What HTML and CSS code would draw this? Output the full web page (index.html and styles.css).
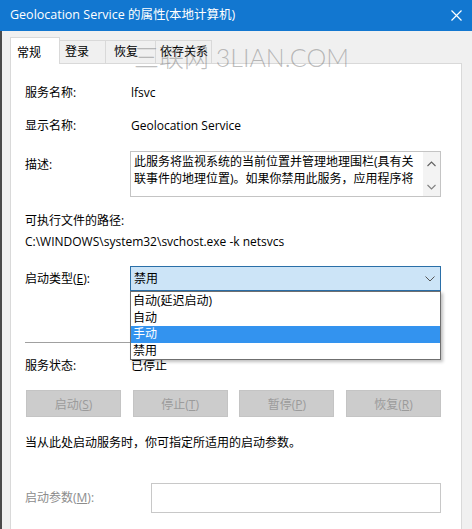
FILE: index.html
```html
<!DOCTYPE html>
<html lang="zh-CN">
<head>
  <meta charset="UTF-8">
  <title>Geolocation Service 的属性(本地计算机)</title>
  <link rel="stylesheet" href="styles.css">
</head>
<body>

<div class="window">
  <div class="titlebar">
    <span class="title">Geolocation Service 的属性(本地计算机)</span>
    <svg class="close" width="11" height="11" viewBox="0 0 11 11">
      <path d="M0.5 0.5 L10.5 10.5 M10.5 0.5 L0.5 10.5" stroke="#fff" stroke-width="1.2"/>
    </svg>
  </div>

  <div class="frame">
    <div class="tabs">
      <div class="tab active">常规</div>
      <div class="tab t-logon">登录</div>
      <div class="tab t-recover">恢复</div>
      <div class="tab t-deps">依存关系</div>
    </div>

    <div class="panel">
      <div class="row r-name">
        <span class="label">服务名称:</span>
        <span class="value">lfsvc</span>
      </div>
      <div class="row r-display">
        <span class="label">显示名称:</span>
        <span class="value">Geolocation Service</span>
      </div>
      <div class="row r-desc">
        <span class="label desc-label">描述:</span>
        <div class="descbox">
          <div class="desc-text">此服务将监视系统的当前位置并管理地理围栏(具有关联事件的地理位置)。如果你禁用此服务，应用程序将</div>
          <div class="scroll">
            <svg width="9" height="6" viewBox="0 0 9 6"><path d="M0.5 5 L4.5 1 L8.5 5" fill="none" stroke="#606060" stroke-width="1.1"/></svg>
            <svg width="9" height="6" viewBox="0 0 9 6"><path d="M0.5 1 L4.5 5 L8.5 1" fill="none" stroke="#808080" stroke-width="1.1"/></svg>
          </div>
        </div>
      </div>

      <div class="exe-label">可执行文件的路径:</div>
      <div class="exe-path">C:\WINDOWS\system32\svchost.exe -k netsvcs</div>

      <div class="row r-start">
        <span class="label">启动类型(<u>E</u>):</span>
        <div class="combo">
          <span>禁用</span>
          <svg width="10" height="6" viewBox="0 0 10 6"><path d="M0.5 0.5 L5 5 L9.5 0.5" fill="none" stroke="#555" stroke-width="1"/></svg>
        </div>
        <ul class="droplist">
          <li>自动(延迟启动)</li>
          <li>自动</li>
          <li class="selected">手动</li>
          <li>禁用</li>
        </ul>
      </div>

      <div class="separator"></div>

      <div class="row r-status">
        <span class="label">服务状态:</span>
        <span class="value">已停止</span>
      </div>

      <div class="buttons">
        <button disabled>启动(<u>S</u>)</button>
        <button disabled>停止(<u>T</u>)</button>
        <button disabled>暂停(<u>P</u>)</button>
        <button disabled>恢复(<u>R</u>)</button>
      </div>

      <p class="hint">当从此处启动服务时，你可指定所适用的启动参数。</p>

      <div class="row r-params">
        <span class="label muted">启动参数(<u>M</u>):</span>
        <div class="param-input"></div>
      </div>
    </div>
  </div>

  <div class="watermark">三联网 3LIAN.COM</div>
</div>

</body>
</html>
```

FILE: styles.css
```css
* {
  box-sizing: border-box;
}

body {
  margin: 0;
  width: 472px;
  height: 529px;
  overflow: hidden;
  font-family: "Open Sans", "Noto Sans CJK SC", sans-serif;
  font-size: 12px;
  color: #000;
  background: #f0f0f0;
}

.window {
  position: relative;
  height: 529px;
}

/* 标题栏 */
.titlebar {
  height: 31px;
  background: #1277d0;
  color: #fff;
  display: flex;
  align-items: center;
  justify-content: space-between;
  padding: 0 10px 1px 10px;
}

.title {
  font-size: 12.5px;
  line-height: 16px;
}

/* 窗体 */
.frame {
  height: 498px;
  background: #f0f0f0;
  border-left: 2px solid #4a4a4a;
  padding: 6px 10px 0 8px;
}

.tabs {
  display: flex;
  align-items: flex-end;
  height: 26px;
}

.tab {
  height: 23px;
  line-height: 22px;
  padding-left: 5px;
  background: #f0f0f0;
  border: 1px solid #d9d9d9;
  border-left: none;
  border-bottom: none;
}

.tab.active {
  width: 50px;
  height: 27px;
  line-height: 29px;
  padding-left: 6px;
  background: #fff;
  border-left: 1px solid #d9d9d9;
  position: relative;
  z-index: 1;
  margin-bottom: -1px;
}

.t-logon { width: 46px; }
.t-recover { width: 50px; padding-left: 8px; }
.t-deps { width: 56px; padding-left: 4px; }

.panel {
  background: #fff;
  border: 1px solid #d9d9d9;
  height: 470px;
  padding: 21px 20px 0 14px;
}

.row {
  display: flex;
  align-items: flex-start;
  line-height: 16px;
}

.label {
  width: 105px;
  flex-shrink: 0;
}

.value {
  padding-left: 1px;
}

.r-display { margin-top: 17px; }

.r-desc { margin-top: 17px; }

.desc-label {
  margin-top: 6px;
}

.descbox {
  flex: 1;
  height: 46px;
  border: 1px solid #c4c4c4;
  display: flex;
  overflow: hidden;
}

.desc-text {
  flex: 1;
  padding: 1px 0 0 3px;
  line-height: 17px;
  width: 290px;
}

.scroll {
  width: 17px;
  background: #f3f3f3;
  display: flex;
  flex-direction: column;
  align-items: center;
  justify-content: space-between;
  padding: 9px 0 6px 0;
}

.exe-label {
  margin-top: 16px;
  line-height: 16px;
}

.exe-path {
  margin-top: 5px;
  line-height: 16px;
}

/* 启动类型 */
.r-start {
  margin-top: 16px;
  position: relative;
  align-items: center;
}

.combo {
  flex: 1;
  height: 25px;
  background: #cce4f7;
  border: 1px solid #2a6fa8;
  display: flex;
  align-items: center;
  justify-content: space-between;
  padding: 0 5px 0 3px;
}

.droplist {
  position: absolute;
  top: 25px;
  left: 105px;
  right: 0;
  margin: 0;
  padding: 1px 0 0 0;
  list-style: none;
  background: #fff;
  border: 1px solid #6f6f6f;
  box-shadow: 2px 2px 3px rgba(0, 0, 0, 0.25);
  z-index: 2;
}

.droplist li {
  height: 16.6px;
  line-height: 16px;
  padding-left: 2px;
}

.droplist li.selected {
  background: #3393ef;
  color: #fff;
}

.separator {
  margin-top: 51px;
  height: 1px;
  background: #a0a0a0;
}

.r-status {
  margin-top: 15px;
}

/* 按钮 */
.buttons {
  margin-top: 16px;
  padding-left: 1px;
  display: flex;
  justify-content: space-between;
}

button {
  width: 95px;
  height: 27px;
  background: #cccccc;
  border: 1px solid #c4c4c4;
  color: #9b9b9b;
  font-family: "Open Sans", "Noto Sans CJK SC", sans-serif;
  font-size: 12px;
  padding: 0;
}

.hint {
  margin: 18px 0 0 0;
  line-height: 16px;
}

.r-params {
  margin-top: 32px;
  align-items: center;
}

.r-params .label {
  width: 126px;
}

.muted {
  color: #8c8c8c;
}

.param-input {
  flex: 1;
  height: 30px;
  border: 1px solid #c8c8c8;
  background: #fff;
}

/* 水印 */
.watermark {
  position: absolute;
  left: 134px;
  top: 38px;
  font-family: Lato, "Noto Sans CJK SC", sans-serif;
  font-weight: 300;
  font-size: 25px;
  color: rgba(110, 110, 110, 0.45);
  pointer-events: none;
  z-index: 3;
}
```
